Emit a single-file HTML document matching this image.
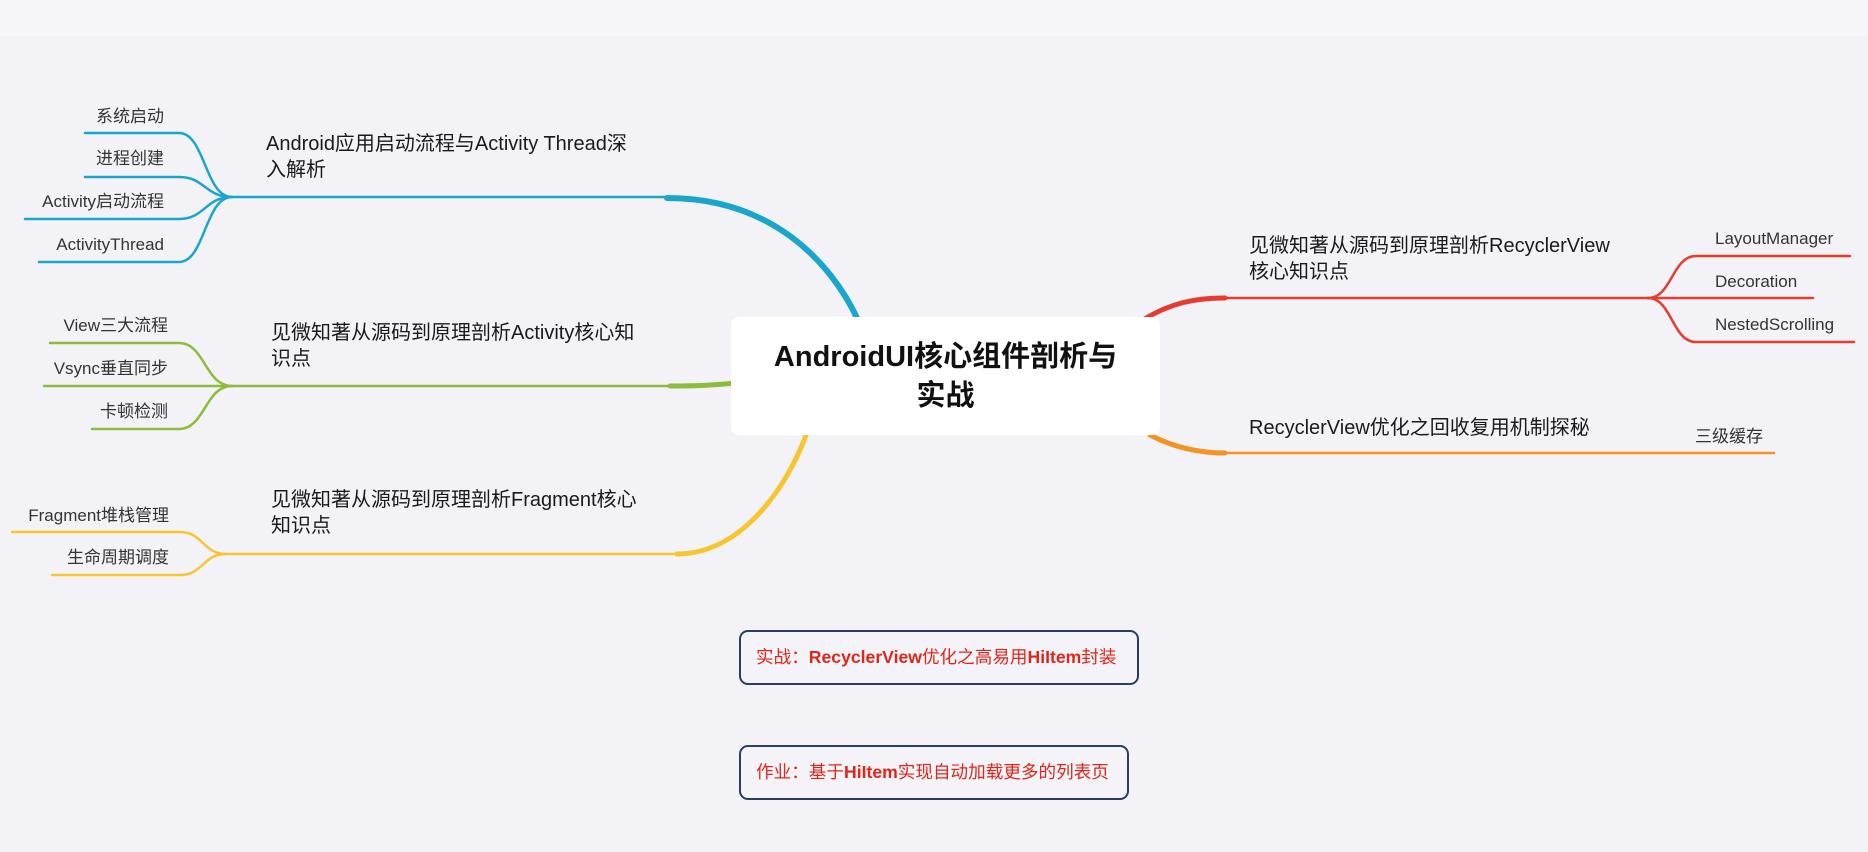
<!DOCTYPE html>
<html><head><meta charset="utf-8">
<style>
html,body{margin:0;padding:0}
body{width:1868px;height:852px;background:#f3f3f7;position:relative;overflow:hidden;font-family:"Liberation Sans","Noto Sans CJK SC",sans-serif;color:#222}
.top{position:absolute;left:0;top:0;width:1868px;height:36px;background:#f6f6f9}
svg{position:absolute;left:0;top:0}
.t{position:absolute;white-space:nowrap;line-height:20px}
.s{font-size:17px;color:#333}
.m{font-size:20px;line-height:26px;color:#1a1a1a}
.r{text-align:right}
.center{position:absolute;left:731px;top:317px;width:429px;height:118px;background:#fff;border-radius:8px;text-align:center;font-size:29px;font-weight:bold;line-height:39px;padding-top:21px;box-sizing:border-box;color:#111}
.box{position:absolute;border:2px solid #2a3d63;border-radius:9px;box-sizing:border-box;color:#e0251b;font-size:17.6px;line-height:51px;padding-left:15px;background:#f4f4f8;white-space:nowrap}
.box b{font-weight:bold}
</style></head><body>
<div class="top"></div>
<svg width="1868" height="852" fill="none" stroke-linecap="round">
<g stroke="#1aa6cc" stroke-width="2.5">
<path d="M85,133 H179 C205,133 205,197 232,197"/>
<path d="M85,177 H179 C205,177 205,197 232,197"/>
<path d="M25,219 H179 C205,219 205,197 232,197"/>
<path d="M39,262 H179 C205,262 205,197 232,197"/>
<path d="M232,197 H667"/>
</g>
<path d="M667,198 C770,198 830,260 858,320" stroke="#1aa6cc" stroke-width="6"/>
<g stroke="#8dbb3e" stroke-width="2.5">
<path d="M50,343 H179 C205,343 205,386 232,386"/>
<path d="M44,386 H232"/>
<path d="M92,429 H179 C205,429 205,386 232,386"/>
<path d="M232,386 H670"/>
</g>
<path d="M670,386 C700,386 715,385 735,383" stroke="#8dbb3e" stroke-width="5"/>
<g stroke="#f7c530" stroke-width="2.5">
<path d="M12,532 H180 C203,532 203,554 226,554"/>
<path d="M52,575 H180 C203,575 203,554 226,554"/>
<path d="M226,554 H677"/>
</g>
<path d="M677,554 C745,554 790,480 806,435" stroke="#f7c530" stroke-width="5"/>
<path d="M1143,320 C1170,303 1195,298 1225,298" stroke="#e63c2f" stroke-width="5"/>
<g stroke="#e63c2f" stroke-width="2.5">
<path d="M1225,298 H1648"/>
<path d="M1648,298 C1672,298 1672,256 1696,256 H1850"/>
<path d="M1648,298 H1813"/>
<path d="M1648,298 C1672,298 1672,342 1696,342 H1854"/>
</g>
<path d="M1150,435 C1175,448 1200,453 1225,453" stroke="#f39323" stroke-width="5"/>
<path d="M1225,453 H1774" stroke="#f39323" stroke-width="2.5"/>
</svg>

<div class="t s r" style="right:1704px;top:107px">系统启动</div>
<div class="t s r" style="right:1704px;top:149px">进程创建</div>
<div class="t s r" style="right:1704px;top:192px">Activity启动流程</div>
<div class="t s r" style="right:1704px;top:235px">ActivityThread</div>
<div class="t m" style="left:266px;top:131px">Android应用启动流程与Activity Thread深<br>入解析</div>
<div class="t s r" style="right:1700px;top:316px">View三大流程</div>
<div class="t s r" style="right:1700px;top:359px">Vsync垂直同步</div>
<div class="t s r" style="right:1700px;top:402px">卡顿检测</div>
<div class="t m" style="left:271px;top:320px">见微知著从源码到原理剖析Activity核心知<br>识点</div>
<div class="t s r" style="right:1699px;top:506px">Fragment堆栈管理</div>
<div class="t s r" style="right:1699px;top:548px">生命周期调度</div>
<div class="t m" style="left:271px;top:487px">见微知著从源码到原理剖析Fragment核心<br>知识点</div>
<div class="t m" style="left:1249px;top:233px">见微知著从源码到原理剖析RecyclerView<br>核心知识点</div>
<div class="t s" style="left:1715px;top:229px">LayoutManager</div>
<div class="t s" style="left:1715px;top:272px">Decoration</div>
<div class="t s" style="left:1715px;top:315px">NestedScrolling</div>
<div class="t m" style="left:1249px;top:415px">RecyclerView优化之回收复用机制探秘</div>
<div class="t s" style="left:1695px;top:427px">三级缓存</div>

<div class="center">AndroidUI核心组件剖析与<br>实战</div>

<div class="box" style="left:739px;top:630px;width:400px;height:55px">实战：<b>RecyclerView</b>优化之高易用<b>HiItem</b>封装</div>
<div class="box" style="left:739px;top:745px;width:390px;height:55px">作业：基于<b>HiItem</b>实现自动加载更多的列表页</div>
</body></html>
